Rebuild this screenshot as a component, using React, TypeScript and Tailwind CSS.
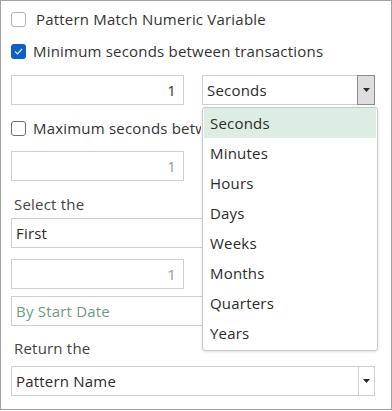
import React from 'react';

const font = { fontFamily: '"Open Sans", "Noto Sans", sans-serif' };

function Box({ checked, dark }: { checked?: boolean; dark?: boolean }) {
    if (checked) {
        return (
            <span className="flex h-[15px] w-[15px] shrink-0 items-center justify-center rounded-[3px] bg-[#0b62c4]">
                <svg width="9" height="7" viewBox="0 0 9 7" fill="none">
                    <path d="M1 3.5 L3.5 6 L8 1" stroke="#dbe8f7" strokeWidth="1.2" />
                </svg>
            </span>
        );
    }
    return (
        <span
            className={`h-[15px] w-[15px] shrink-0 rounded-[3px] border bg-white ${dark ? 'border-[#6e6e6e]' : 'border-[#b4b4b4]'}`}
        />
    );
}

function Arrow() {
    return (
        <svg width="7" height="4" viewBox="0 0 7 4">
            <path d="M0 0 H7 L3.5 4 Z" fill="#2a2a2a" />
        </svg>
    );
}

function NumBox({ value, muted }: { value: string; muted?: boolean }) {
    return (
        <div
            className={`flex h-[30px] w-[173px] shrink-0 items-center justify-end border border-[#cfcfcf] bg-white pr-[7px] ${muted ? 'text-[#7f9f8f]' : 'text-[#333]'}`}
        >
            {value}
        </div>
    );
}

function Select({ text, muted }: { text: string; muted?: boolean }) {
    return (
        <div className="flex h-[30px] w-[364px] items-stretch border border-[#cfcfcf] bg-white">
            <div className={`flex flex-1 items-center pl-[4px] ${muted ? 'text-[#6f9a85]' : 'text-[#2b2b2b]'}`}>
                {text}
            </div>
            <div className="flex w-[16px] items-center justify-center border-l border-[#cfcfcf]">
                <Arrow />
            </div>
        </div>
    );
}

const units = ['Seconds', 'Minutes', 'Hours', 'Days', 'Weeks', 'Months', 'Quarters', 'Years'];

export default function App() {
    return (
        <div
            style={font}
            className="relative h-[410px] w-[392px] overflow-hidden border border-[#a3a3a3] bg-white text-[15px] tracking-[0.2px] text-[#333]"
        >
            <div className="flex flex-col px-[10px] pt-[10px]">
                <div className="flex h-[17px] items-center gap-[10px]">
                    <Box />
                    <span className="whitespace-nowrap">Pattern Match Numeric Variable</span>
                </div>

                <div className="mt-[15px] flex h-[17px] items-center gap-[7px]">
                    <Box checked />
                    <span className="whitespace-nowrap">Minimum seconds between transactions</span>
                </div>

                <div className="mt-[15px] flex gap-[18px]">
                    <NumBox value="1" />
                    <div className="flex h-[30px] w-[173px] items-stretch border border-[#cfcfcf] bg-white">
                        <div className="flex flex-1 items-center pl-[4px] text-[#2b2b2b]">Seconds</div>
                        <div className="-m-px flex w-[18px] items-center justify-center border border-[#8c8c8c] bg-[#dedede]">
                            <Arrow />
                        </div>
                    </div>
                </div>

                <div className="mt-[15px] flex h-[17px] items-center gap-[7px]">
                    <Box dark />
                    {/* cut off under the open list, as in the real form */}
                    <span className="w-[168px] overflow-hidden whitespace-nowrap">Maximum seconds between transactions</span>
                </div>

                <div className="mt-[14px]">
                    <NumBox value="1" muted />
                </div>

                <div className="mt-[13px] flex h-[20px] items-center pl-[3px] text-[#444]">Select the</div>

                <div className="mt-[4px]">
                    <Select text="First" />
                </div>

                <div className="mt-[11px]">
                    <NumBox value="1" muted />
                </div>

                <div className="mt-[7px]">
                    <Select text="By Start Date" muted />
                </div>

                <div className="mt-[12px] flex h-[20px] items-center pl-[3px] text-[#444]">Return the</div>

                <div className="mt-[8px]">
                    <Select text="Pattern Name" />
                </div>
            </div>

            {/* open unit list */}
            <div className="absolute top-[106px] left-[201px] w-[176px] rounded-[3px] border border-[#c9c9c9] bg-white px-[1px] pb-[2px] shadow-[0_1px_3px_rgba(0,0,0,0.12)]">
                {units.map((u, i) => (
                    <div
                        key={u}
                        className={`flex h-[30px] items-center pl-[6px] text-[#2b2b2b] ${i === 0 ? 'bg-[#deede4]' : ''}`}
                    >
                        {u}
                    </div>
                ))}
            </div>
        </div>
    );
}
